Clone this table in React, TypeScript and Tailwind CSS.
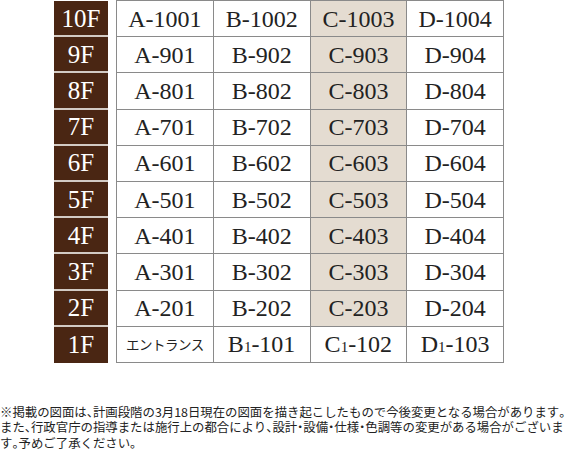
const floors = ["10F", "9F", "8F", "7F", "6F", "5F", "4F", "3F", "2F"];

function Sub({ letter, rest }: { letter: string; rest: string }) {
  return (
    <span>
      {letter}
      <span className="text-[15px]">1</span>
      {rest}
    </span>
  );
}

// half-width punctuation, as in the printed note
function Note({ text }: { text: string }) {
  return (
    <div className="whitespace-nowrap">
      {text.split(/([、・。])/).map((part, i) =>
        part === "、" || part === "・" || (part === "。" && i < text.length - 2) ? (
          <span key={i} style={{ fontFeatureSettings: '"halt"' }}>
            {part}
          </span>
        ) : (
          <span key={i}>{part}</span>
        ),
      )}
    </div>
  );
}

export default function App() {
  const serif = { fontFamily: '"Liberation Serif", "Times New Roman", serif' };

  return (
    <div className="relative h-[459px] w-[566px] overflow-hidden bg-white text-[#222]">
      <div className="flex items-start">
        {/* floor labels */}
        <div className="ml-[54px] flex w-[54px] flex-col pt-px" style={serif}>
          {[...floors, "1F"].map((f, i) => (
            <div
              key={f}
              className={
                "flex h-[36.2px] items-center justify-center bg-[#4a2613] text-[25px] leading-none text-white " +
                (i < 9 ? "border-b-2 border-[#d3cbc4]" : "")
              }
            >
              {f}
            </div>
          ))}
        </div>

        {/* unit table */}
        <table
          className="ml-[8px] w-[388px] table-fixed border-collapse text-[24px] leading-none"
          style={serif}
        >
          <tbody>
            {floors.map((f) => {
              const n = f.replace("F", "");
              return (
                <tr key={f} className="h-[36.2px]">
                  <td className="border border-[#8a8a8a] text-center">A-{n}01</td>
                  <td className="border border-[#8a8a8a] text-center">B-{n}02</td>
                  <td className="border border-[#8a8a8a] bg-[#e4dcd1] text-center">
                    C-{n}03
                  </td>
                  <td className="border border-[#8a8a8a] text-center">D-{n}04</td>
                </tr>
              );
            })}
            <tr className="h-[36.2px]">
              <td
                className="border border-[#8a8a8a] text-center text-[13.5px] tracking-[-0.5px]"
                style={{ fontFamily: '"Noto Sans CJK JP", sans-serif' }}
              >
                エントランス
              </td>
              <td className="border border-[#8a8a8a] text-center">
                <Sub letter="B" rest="-101" />
              </td>
              <td className="border border-[#8a8a8a] text-center">
                <Sub letter="C" rest="-102" />
              </td>
              <td className="border border-[#8a8a8a] text-center">
                <Sub letter="D" rest="-103" />
              </td>
            </tr>
          </tbody>
        </table>
      </div>

      {/* note */}
      <div
        className="mt-[42px] text-[12.4px] leading-[15.6px] text-[#222]"
        style={{ fontFamily: '"Noto Sans CJK JP", sans-serif' }}
      >
        <Note text="※掲載の図面は、計画段階の3月18日現在の図面を描き起こしたもので今後変更となる場合があります。" />
        <Note text="また、行政官庁の指導または施行上の都合により、設計・設備・仕様・色調等の変更がある場合がございま" />
        <Note text="す。予めご了承ください。" />
      </div>
    </div>
  );
}
